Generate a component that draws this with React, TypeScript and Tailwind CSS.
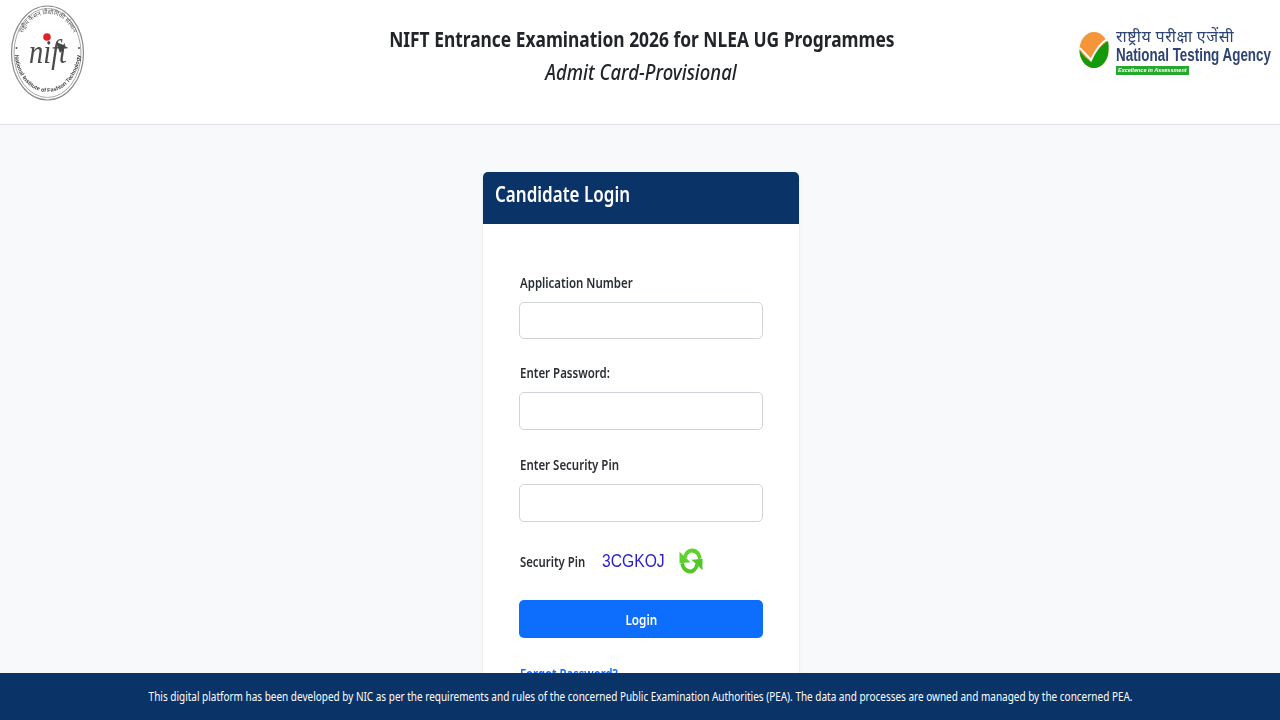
const fontStack = "font-['Noto_Sans','Open_Sans',sans-serif]";

function NiftLogo() {
  return (
    <svg width="76" height="98" viewBox="0 0 76 98" className="blur-[0.4px]">
      <defs>
        <path id="niftTop" d="M9 46 A29 37 0 0 1 67 46" />
        <path id="niftBottom" d="M4.5 46 A33 41 0 0 0 70.5 46" />
      </defs>
      <ellipse cx="37.5" cy="48" rx="36" ry="47" fill="#fff" stroke="#8a8a8a" strokeWidth="1.2" />
      <ellipse cx="37.5" cy="48" rx="33.5" ry="44.5" fill="none" stroke="#a8a8a8" strokeWidth="1" />
      <text fontSize="6.2" fill="#555" fontFamily="'Noto Sans CJK SC', 'Noto Sans', sans-serif">
        <textPath href="#niftTop" startOffset="50%" textAnchor="middle">
          राष्ट्रीय फैशन प्रौद्योगिकी संस्थान
        </textPath>
      </text>
      <text fontSize="5.6" fontWeight="700" fill="#444" fontFamily="'Liberation Sans', sans-serif">
        <textPath href="#niftBottom" startOffset="50%" textAnchor="middle">
          National Institute of Fashion Technology
        </textPath>
      </text>
      <circle cx="6.5" cy="43" r="1" fill="#555" />
      <circle cx="69" cy="43" r="1" fill="#555" />
      <circle cx="37" cy="32" r="3.8" fill="#e3202a" />
      <text
        x="38"
        y="58"
        textAnchor="middle"
        fontSize="34"
        fontStyle="italic"
        fill="#4a4a4a"
        fontFamily="'Liberation Serif', serif"
        textLength="38"
        lengthAdjust="spacingAndGlyphs"
      >
        nift
      </text>
      <path d="M46 37 L56 41 L50 48 Z" fill="#444" />
    </svg>
  );
}

function NtaLogo() {
  return (
    <div className="flex items-center gap-[7px] blur-[0.3px]">
      <svg width="30" height="38" viewBox="0 0 30 38">
        <ellipse cx="15" cy="19" rx="14.5" ry="18" fill="#f4953a" />
        <path d="M0.5 19 C3 24 8 28 12 31 C16 22 22 14 29 10 C30 14 29.5 17 29.5 19 C29.5 29 23 37 15 37 C7 37 0.5 29 0.5 19 Z" fill="#129a0c" />
        <path d="M1 17 C4 21 9 25 12 29 C16 20 22 12 28 8" fill="none" stroke="#fff" strokeWidth="2" />
      </svg>
      <div className="flex flex-col w-[155px]">
        <span className="text-[16px] leading-[20px] text-[#2d4373] tracking-[0.6px] font-['Noto_Sans_CJK_SC','Noto_Sans',sans-serif] whitespace-nowrap">
          राष्ट्रीय परीक्षा एजेंसी
        </span>
        <span className="text-[18px] leading-[20px] font-semibold text-[#2d4373] whitespace-nowrap font-['Liberation_Sans',sans-serif] origin-left scale-x-[0.745]">
          National Testing Agency
        </span>
        <span className="mt-[1px] w-[73px] h-[9px] bg-[#27a82c] text-white text-[5.5px] leading-[9px] italic font-semibold pl-[2px] whitespace-nowrap font-['Liberation_Sans',sans-serif]">
          Excellence in Assessment
        </span>
      </div>
    </div>
  );
}

function RefreshIcon() {
  return (
    <svg width="24" height="30" viewBox="0 0 24 26" preserveAspectRatio="none" className="blur-[0.3px]">
      <g>
        <path d="M6 10 C7 5 11 3.5 14 4 C17 4.5 20 6.5 21 11" fill="none" stroke="#5fd12e" strokeWidth="3.6" />
        <path d="M0.5 5 L0.5 15 L11.5 14 Z" fill="#5fd12e" />
      </g>
      <g transform="rotate(180 12 13)">
        <path d="M6 10 C7 5 11 3.5 14 4 C17 4.5 20 6.5 21 11" fill="none" stroke="#52c626" strokeWidth="3.6" />
        <path d="M0.5 5 L0.5 15 L11.5 14 Z" fill="#52c626" />
      </g>
    </svg>
  );
}

function Field({ label, className, inputClass }: { label: string; className: string; inputClass: string }) {
  return (
    <div className={className}>
      <label className="block ml-[1px] text-[14px] leading-[20px] font-semibold text-[#2b2f33] whitespace-nowrap origin-left scale-x-[0.82] mb-[9px]">
        {label}
      </label>
      <input className={`block w-full ${inputClass} bg-white border border-[#ced4da] rounded-[5px]`} />
    </div>
  );
}

export default function App() {
  return (
    <div className={`min-h-screen bg-[#f8f9fa] ${fontStack} pb-[60px]`}>
      <header className="h-[125px] bg-white border-b border-[#dee2e6] flex justify-between items-start">
        <div className="pl-[10px] pt-[5px] w-[200px]">
          <NiftLogo />
        </div>
        <div className="pt-[22px] text-center text-[#212529] flex flex-col items-center w-[640px] ml-[3px]">
          <h1 className="text-[22px] leading-[33px] font-bold whitespace-nowrap scale-x-[0.79]">
            NIFT Entrance Examination 2026 for NLEA UG Programmes
          </h1>
          <h2 className="text-[22px] leading-[33px] italic font-medium whitespace-nowrap scale-x-[0.84]">Admit Card-Provisional</h2>
        </div>
        <div className="w-[200px] pt-[25px] flex justify-end pr-[9px]">
          <NtaLogo />
        </div>
      </header>
      <main className="flex justify-center pt-[47px] pl-[2px]">
        <div className="w-[316px] bg-white rounded-[5px] shadow-sm">
          <div className="h-[52px] bg-[#0a3368] rounded-t-[5px] flex items-center pl-[12px]">
            <h3 className="text-[21px] font-semibold text-white whitespace-nowrap origin-left scale-x-[0.81] -mt-[6px]">Candidate Login</h3>
          </div>
          <div className="px-[36px] pt-[49px] pb-[40px]">
            <Field label="Application Number" className="mb-[24px]" inputClass="h-[37px]" />
            <Field label="Enter Password:" className="mb-[25px]" inputClass="h-[38px]" />
            <Field label="Enter Security Pin" className="mb-[24px]" inputClass="h-[38px]" />
            <div className="flex items-center h-[30px] mb-[24px]">
              <span className="w-[65px] ml-[1px] text-[14px] font-semibold text-[#2b2f33] whitespace-nowrap origin-left scale-x-[0.81]">Security Pin</span>
              <span className="ml-[17px] text-[18px] text-[#2a1fc8] font-['Liberation_Sans',sans-serif] whitespace-nowrap w-[63px] origin-left scale-x-[0.87]">3CGKOJ</span>
              <span className="ml-[14px]">
                <RefreshIcon />
              </span>
            </div>
            <button className="w-full h-[38px] bg-[#0d6efd] rounded-[5px] text-white text-[15px] font-semibold">
              <span className="inline-block scale-x-[0.78]">Login</span>
            </button>
            <a className="block ml-[1px] mt-[25px] text-[14px] text-[#0d6efd] font-semibold whitespace-nowrap origin-left scale-x-[0.81]">Forgot Password?</a>
          </div>
        </div>
      </main>
      <footer className="fixed bottom-0 left-0 right-0 h-[47px] pt-[1px] bg-[#0a3368] flex items-center justify-center text-white text-[13px] pl-[2px]">
        <span className="whitespace-nowrap scale-x-[0.768]">
          This digital platform has been developed by NIC as per the requirements and rules of the concerned Public Examination Authorities (PEA). The data and processes are owned and managed by the concerned PEA.
        </span>
      </footer>
    </div>
  );
}
